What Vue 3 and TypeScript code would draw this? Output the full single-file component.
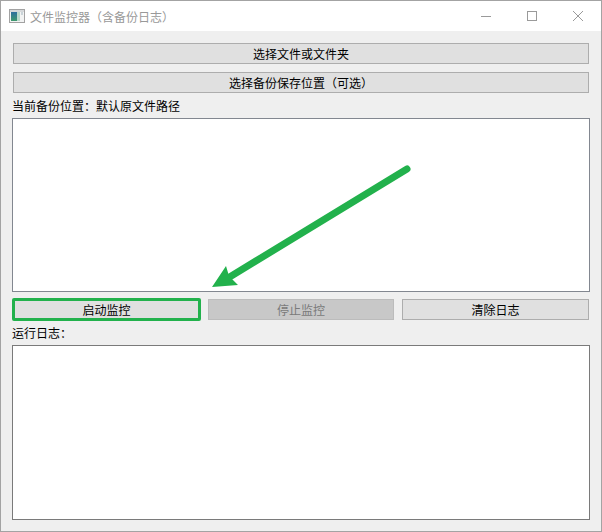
<script setup lang="ts">
const actions = [
  { label: "启动监控", kind: "start" },
  { label: "停止监控", kind: "stop" },
  { label: "清除日志", kind: "clear" },
];
</script>

<template>
  <div class="window">
    <header class="titlebar">
      <svg class="app-icon" width="16" height="16" viewBox="0 0 16 16">
        <defs>
          <linearGradient id="pane" x1="0" y1="0" x2="0" y2="1">
            <stop offset="0" stop-color="#2f6f9f" />
            <stop offset="1" stop-color="#3f9a6e" />
          </linearGradient>
        </defs>
        <rect x="0.5" y="1.5" width="15" height="13" fill="#f2f3f3" stroke="#a2a2a2" />
        <rect x="1" y="2" width="14" height="2" fill="#d5d8da" />
        <rect x="2" y="4" width="6" height="9" fill="url(#pane)" />
        <rect x="8" y="4" width="3" height="9" fill="#b9d8cb" />
        <rect x="12" y="4" width="2" height="3" fill="#c9d3d8" />
      </svg>
      <span class="title">文件监控器（含备份日志）</span>
      <div class="controls">
        <svg width="12" height="12" viewBox="0 0 12 12"><path d="M1 6.5h10" stroke="#9a9a9a" fill="none" /></svg>
        <svg width="12" height="12" viewBox="0 0 12 12"><rect x="1.5" y="1.5" width="9" height="9" stroke="#9a9a9a" fill="none" /></svg>
        <svg width="12" height="12" viewBox="0 0 12 12"><path d="M1 1l10 10M11 1L1 11" stroke="#9a9a9a" fill="none" /></svg>
      </div>
    </header>

    <main class="body">
      <button class="btn wide first">选择文件或文件夹</button>
      <button class="btn wide second">选择备份保存位置（可选）</button>
      <div class="label">当前备份位置：默认原文件路径</div>
      <div class="box watch"></div>
      <div class="actions">
        <button v-for="a in actions" :key="a.kind" class="btn" :class="a.kind">{{ a.label }}</button>
      </div>
      <div class="label log-label">运行日志：</div>
      <div class="box log"></div>
    </main>

    <svg class="arrow" width="602" height="532" viewBox="0 0 602 532">
      <path d="M0 .5H602" stroke="#a3a3a3" fill="none" />
      <path d="M250 .5h23" stroke="#8a6a35" fill="none" />
      <path d="M351 .5h12" stroke="#3a3a3a" fill="none" />
      <path d="M363 .5h25" stroke="#2e7d32" fill="none" />
      <path d="M0 265.5h1M0 270.5h1M0 290.5h1M0 293.5h1M0 297.5h1" stroke="#555" fill="none" />
      <path d="M407 169L228 278" stroke="#22b14c" stroke-width="7" stroke-linecap="round" fill="none" />
      <path d="M212 287L226 266L229 276L238 285Z" fill="#22b14c" />
    </svg>
  </div>
</template>

<style>
html,
body {
  margin: 0;
  background: #fff;
}
</style>

<style scoped>
.window {
  position: relative;
  box-sizing: border-box;
  width: 602px;
  height: 532px;
  border: 1px solid #a3a3a3;
  display: flex;
  flex-direction: column;
  font-family: "Noto Sans CJK SC", "Liberation Sans", sans-serif;
  font-size: 12px;
  color: #000;
  overflow: hidden;
}

.titlebar {
  flex: none;
  height: 30px;
  display: flex;
  align-items: center;
  background: #fff;
  padding-left: 8px;
}

.app-icon {
  flex: none;
}

.title {
  margin-left: 5px;
  color: #999;
}

.controls {
  margin-left: auto;
  display: flex;
  align-items: center;
  gap: 34px;
  padding-right: 17px;
}

.body {
  flex: 1;
  display: flex;
  flex-direction: column;
  background: #efefef;
  padding: 12px 11px 10px;
}

.btn {
  box-sizing: border-box;
  margin: 0;
  padding: 0;
  height: 21px;
  background: #e0e0e0;
  border: 1px solid #adadad;
  border-radius: 0;
  font: inherit;
  color: #000;
}

.wide {
  margin-left: 1px;
  margin-right: 1px;
}

.second {
  margin-top: 8px;
}

.label {
  height: 18px;
  line-height: 18px;
  margin-top: 4px;
}

.box {
  box-sizing: border-box;
  background: #fff;
  border: 1px solid #828790;
  flex: none;
}

.watch {
  height: 174px;
  margin-top: 3px;
}

.actions {
  display: grid;
  grid-template-columns: 189px 186px 188px;
  column-gap: 7px;
  margin-top: 6px;
  height: 23px;
  align-items: center;
}

.start {
  height: 23px;
  border: 3px solid #22b14c;
  border-radius: 2px;
}

.stop {
  background: #c8c8c8;
  border-color: #bcbcbc;
  color: #7a7a7a;
}

.clear {
  margin-left: 1px;
}

.log-label {
  margin-top: 3px;
}

.log {
  height: 175px;
  margin-top: 3px;
  border-color: #7a7a7a;
}

.arrow {
  position: absolute;
  left: -1px;
  top: -1px;
  pointer-events: none;
}
</style>
